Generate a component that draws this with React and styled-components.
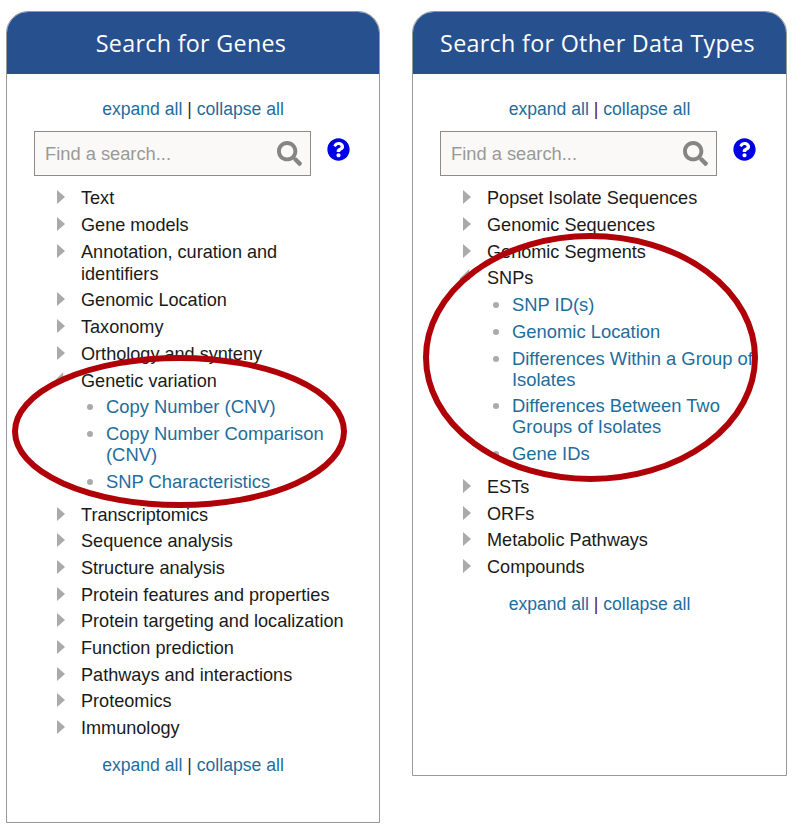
import React from "react";
import styled, { createGlobalStyle } from "styled-components";
import { FaQuestionCircle, FaSearch } from "react-icons/fa";

const GlobalStyle = createGlobalStyle`
  html, body {
    margin: 0;
    padding: 0;
    background: #fff;
  }
  body {
    font-family: "Liberation Sans", Arial, sans-serif;
  }
`;

const Page = styled.div`
  position: relative;
  width: 806px;
  height: 827px;
  overflow: hidden;
  box-sizing: border-box;
  padding: 11px 0 0 6px;
  display: flex;
  align-items: flex-start;
  gap: 32px;
`;

const Panel = styled.section`
  box-sizing: border-box;
  width: ${(p) => p.$width}px;
  height: ${(p) => p.$height}px;
  border: 1px solid #999;
  border-radius: 22px 22px 0 0;
  overflow: hidden;
`;

const Header = styled.h2`
  margin: -1px -1px 0;
  height: 63px;
  padding: 1px 4px 0 0;
  box-sizing: border-box;
  background: #27508f;
  color: #fff;
  font-family: "Open Sans", sans-serif;
  font-size: 23.3px;
  font-weight: 500;
  letter-spacing: 0.3px;
  display: flex;
  align-items: center;
  justify-content: center;
`;

const Toggles = styled.div`
  height: 21px;
  margin-top: ${(p) => p.$top}px;
  font-size: 17.6px;
  line-height: 21px;
  text-align: center;
  color: #5a1a2a;
`;

const ToggleLink = styled.a`
  color: #1f6d9c;
`;

const SearchRow = styled.div`
  display: flex;
  align-items: flex-start;
  margin: 11px 0 0 27px;
`;

const SearchBox = styled.div`
  box-sizing: border-box;
  width: 277px;
  height: 45px;
  border: 1px solid #8c8c8c;
  background: #faf9f7;
  padding: 0 8px 0 10px;
  display: flex;
  align-items: center;
  justify-content: space-between;
  font-size: 18.3px;
  color: #999;
`;

const SearchIcon = styled(FaSearch)`
  width: 25px;
  height: 25px;
  color: #858585;
`;

const HelpIcon = styled(FaQuestionCircle)`
  width: 23px;
  height: 23px;
  margin: 7px 0 0 16px;
  color: #0000e6;
  background: radial-gradient(circle, #fff 60%, transparent 62%);
`;

const Tree = styled.ul`
  list-style: none;
  margin: 11.4px 0 0;
  padding: 0 30px 0 74px;
`;

const Branch = styled.li`
  position: relative;
  margin-bottom: 4.7px;
  font-size: 18.1px;
  line-height: 22px;
  color: #1a1a1a;
  &::before {
    content: "";
    position: absolute;
    left: -24px;
    top: 3px;
    border-left: 8px solid #aaa;
    border-top: 7.5px solid transparent;
    border-bottom: 7.5px solid transparent;
    transform: ${(p) => (p.$open ? "rotate(45deg)" : "none")};
  }
`;

const Leaves = styled.ul`
  list-style: none;
  margin: 4.7px 0 0;
  padding: 0 0 0 25px;
`;

const Leaf = styled.li`
  position: relative;
  margin-bottom: 5.7px;
  font-size: 18.4px;
  line-height: 21px;
  color: #1f6d9c;
  &::before {
    content: "";
    position: absolute;
    left: -19px;
    top: 8px;
    width: 6px;
    height: 6px;
    border-radius: 50%;
    background: #aaa;
  }
  &:last-child {
    margin-bottom: 12px;
  }
`;

const Marks = styled.svg`
  position: absolute;
  left: 0;
  top: 0;
  pointer-events: none;
`;

const genes = [
  { label: "Text" },
  { label: "Gene models" },
  { label: "Annotation, curation and identifiers" },
  { label: "Genomic Location" },
  { label: "Taxonomy" },
  { label: "Orthology and synteny" },
  {
    label: "Genetic variation",
    leaves: ["Copy Number (CNV)", "Copy Number Comparison (CNV)", "SNP Characteristics"],
  },
  { label: "Transcriptomics" },
  { label: "Sequence analysis" },
  { label: "Structure analysis" },
  { label: "Protein features and properties" },
  { label: "Protein targeting and localization" },
  { label: "Function prediction" },
  { label: "Pathways and interactions" },
  { label: "Proteomics" },
  { label: "Immunology" },
];

const otherTypes = [
  { label: "Popset Isolate Sequences" },
  { label: "Genomic Sequences" },
  { label: "Genomic Segments" },
  {
    label: "SNPs",
    leaves: [
      "SNP ID(s)",
      "Genomic Location",
      "Differences Within a Group of Isolates",
      "Differences Between Two Groups of Isolates",
      "Gene IDs",
    ],
  },
  { label: "ESTs" },
  { label: "ORFs" },
  { label: "Metabolic Pathways" },
  { label: "Compounds" },
];

const ExpandCollapse = ({ top }) => (
  <Toggles $top={top}>
    <ToggleLink>expand all</ToggleLink> | <ToggleLink>collapse all</ToggleLink>
  </Toggles>
);

const SearchPanel = ({ title, width, height, items }) => (
  <Panel $width={width} $height={height}>
    <Header>{title}</Header>
    <ExpandCollapse top={25} />
    <SearchRow>
      <SearchBox>
        Find a search...
        <SearchIcon />
      </SearchBox>
      <HelpIcon />
    </SearchRow>
    <Tree>
      {items.map((item) => (
        <Branch key={item.label} $open={!!item.leaves}>
          {item.label}
          {item.leaves && (
            <Leaves>
              {item.leaves.map((leaf) => (
                <Leaf key={leaf}>{leaf}</Leaf>
              ))}
            </Leaves>
          )}
        </Branch>
      ))}
    </Tree>
    <ExpandCollapse top={16} />
  </Panel>
);

export default function App() {
  return (
    <>
      <GlobalStyle />
      <Page>
        <SearchPanel title="Search for Genes" width={374} height={812} items={genes} />
        <SearchPanel title="Search for Other Data Types" width={375} height={765} items={otherTypes} />
        <Marks width="806" height="827" fill="none" stroke="#b00008" strokeWidth="6">
          <ellipse cx="179.5" cy="431.5" rx="164.5" ry="73.5" />
          <ellipse cx="590.5" cy="357.5" rx="164.5" ry="121.5" />
        </Marks>
      </Page>
    </>
  );
}
